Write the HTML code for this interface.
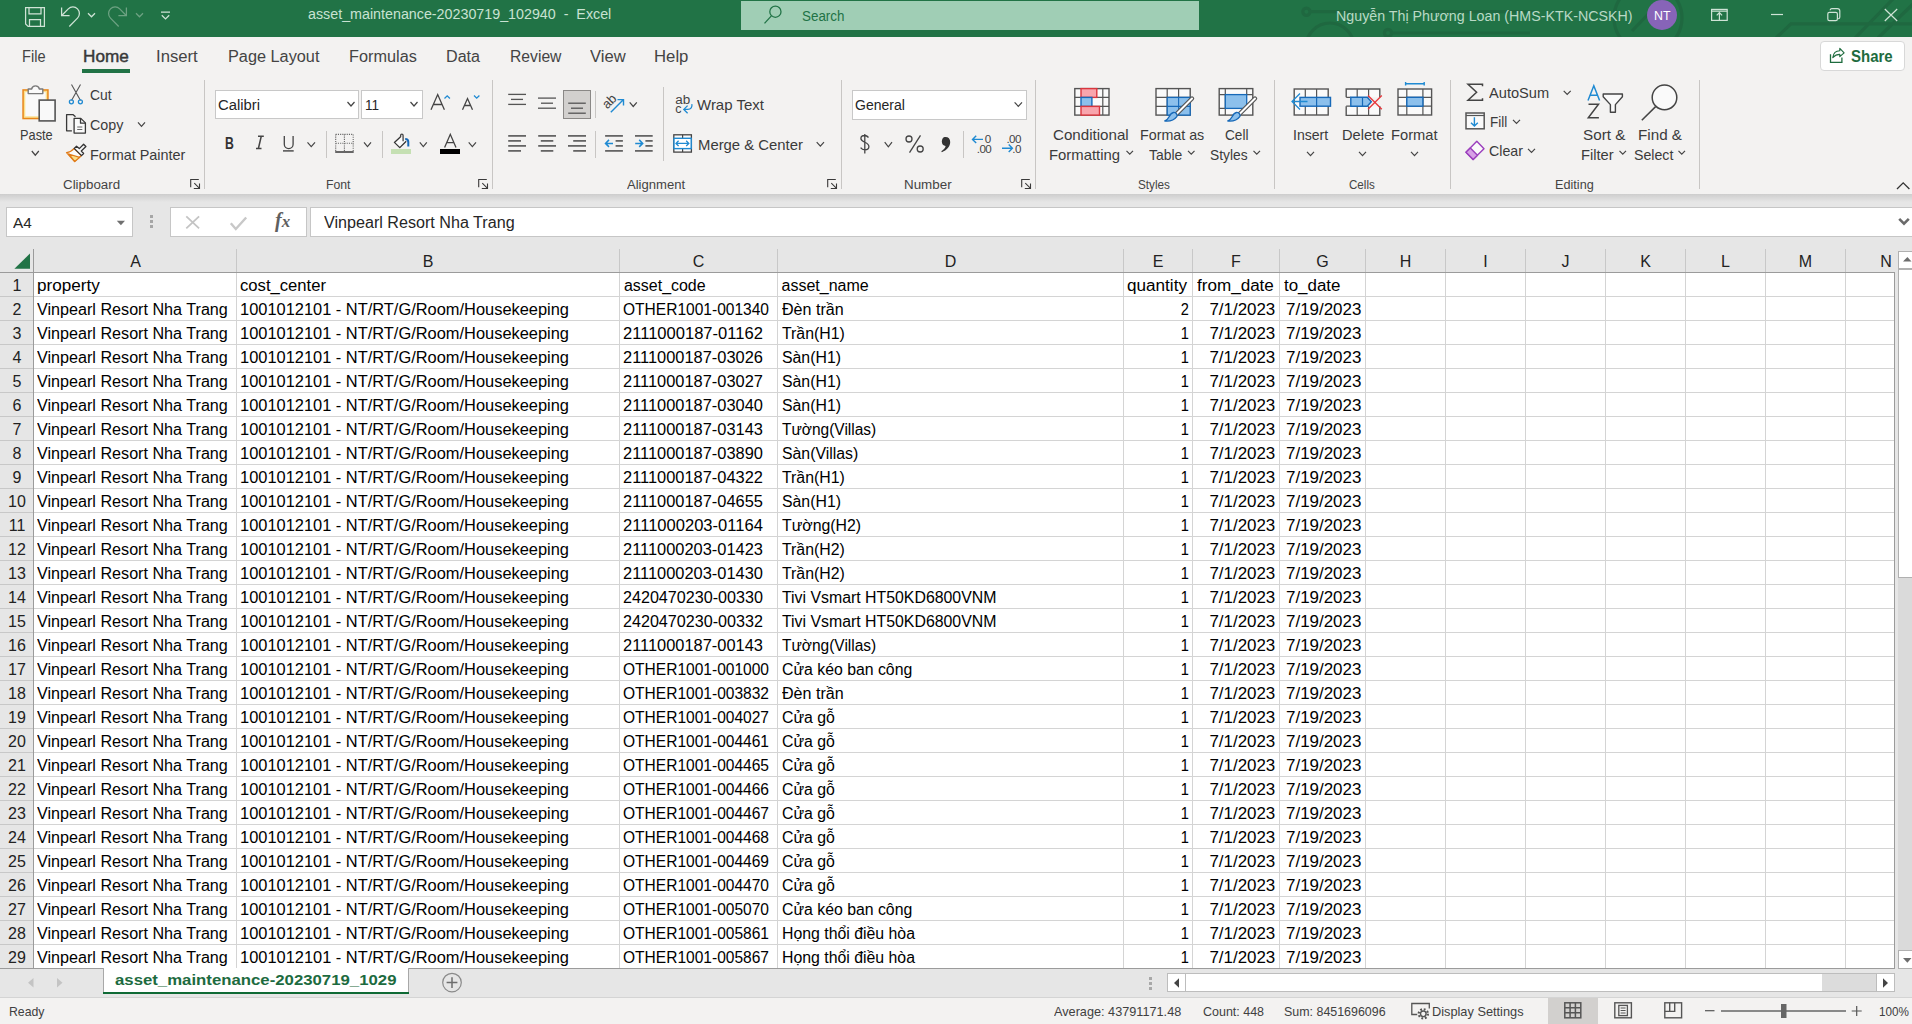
<!DOCTYPE html>
<html><head><meta charset="utf-8"><style>
html,body{margin:0;padding:0;width:1912px;height:1024px;overflow:hidden;background:#fff;}
body{position:relative;font-family:"Liberation Sans",sans-serif;}
.t{position:absolute;white-space:nowrap;line-height:1;}
.r{position:absolute;}
svg.ov{position:absolute;left:0;top:0;}
</style></head><body>
<div class="r" style="left:0px;top:0px;width:1912px;height:37px;background:#217346;"></div>
<svg class="ov" width="1912" height="37"><g fill="none" stroke="#1f6840" stroke-width="3.2"><circle cx="1306.4" cy="11.7" r="3.6"/><path d="M1310 11.7H1535"/><circle cx="1330" cy="47" r="24"/><circle cx="1388" cy="33" r="3.6"/><path d="M1391.6 33H1530"/><circle cx="1648" cy="18" r="34"/><path d="M1632 31L1656 6"/><path d="M1776 38L1791 23.8H1912 M1855 38L1893 -1 M1878 38L1913 4"/></g></svg>
<div class="t" style="top:7px;left:308.00px;font-size:14.29px;color:#c8e2d2;white-space:pre;">asset_maintenance-20230719_102940  -  Excel</div>
<div class="r" style="left:741px;top:1px;width:458px;height:29px;background:#a0ceb5;"></div>
<div class="t" style="top:8px;left:801.70px;font-size:15.22px;color:#217346;transform:scaleX(0.8807);transform-origin:0 0;">Search</div>
<div class="t" style="top:8px;left:1336.40px;font-size:15.22px;color:#b9d9c5;transform:scaleX(0.9360);transform-origin:0 0;">Nguyễn Thị Phương Loan (HMS-KTK-NCSKH)</div>
<div class="r" style="left:1647px;top:-0.4px;width:30px;height:30px;border-radius:50%;background:#8764b8;"></div>
<div class="t" style="top:10px;left:1654.00px;font-size:12.36px;color:#ffffff;">NT</div>
<div class="r" style="left:0px;top:37px;width:1912px;height:157px;background:#f3f2f1;"></div>
<div class="t" style="top:49px;left:21.70px;font-size:16.62px;color:#444444;transform:scaleX(0.8782);transform-origin:0 0;">File</div>
<div class="t" style="top:49px;left:156.30px;font-size:16.62px;color:#444444;transform:scaleX(1.0036);transform-origin:0 0;">Insert</div>
<div class="t" style="top:49px;left:227.50px;font-size:16.62px;color:#444444;transform:scaleX(0.9805);transform-origin:0 0;">Page Layout</div>
<div class="t" style="top:49px;left:348.90px;font-size:16.62px;color:#444444;transform:scaleX(0.9797);transform-origin:0 0;">Formulas</div>
<div class="t" style="top:49px;left:445.90px;font-size:16.62px;color:#444444;transform:scaleX(0.9701);transform-origin:0 0;">Data</div>
<div class="t" style="top:49px;left:509.50px;font-size:16.62px;color:#444444;transform:scaleX(0.9447);transform-origin:0 0;">Review</div>
<div class="t" style="top:49px;left:590.30px;font-size:16.62px;color:#444444;transform:scaleX(0.9991);transform-origin:0 0;">View</div>
<div class="t" style="top:49px;left:654.30px;font-size:16.62px;color:#444444;transform:scaleX(1.0072);transform-origin:0 0;">Help</div>
<div class="t" style="top:49px;left:82.80px;font-size:16.62px;color:#383838;transform:scaleX(1.0321);transform-origin:0 0;-webkit-text-stroke:0.45px #383838;">Home</div>
<div class="r" style="left:82px;top:69px;width:48px;height:4px;background:#217346;"></div>
<div class="r" style="left:1820px;top:41px;width:83px;height:28px;border:1px solid #d8d8d8;border-radius:4px;background:#fff;"></div>
<div class="t" style="top:48px;left:1850.80px;font-size:17.04px;color:#1e6c3e;font-weight:bold;transform:scaleX(0.8803);transform-origin:0 0;">Share</div>
<div class="r" style="left:204px;top:80px;width:1px;height:109px;background:#c8c6c4;"></div>
<div class="r" style="left:492px;top:80px;width:1px;height:109px;background:#c8c6c4;"></div>
<div class="r" style="left:841px;top:80px;width:1px;height:109px;background:#c8c6c4;"></div>
<div class="r" style="left:1035px;top:80px;width:1px;height:109px;background:#c8c6c4;"></div>
<div class="r" style="left:1274px;top:80px;width:1px;height:109px;background:#c8c6c4;"></div>
<div class="r" style="left:1450px;top:80px;width:1px;height:109px;background:#c8c6c4;"></div>
<div class="r" style="left:1699px;top:80px;width:1px;height:109px;background:#c8c6c4;"></div>
<div class="t" style="top:127px;left:19.60px;font-size:15.15px;color:#3b3b3b;transform:scaleX(0.8446);transform-origin:0 0;">Paste</div>
<div class="t" style="top:87px;left:90.20px;font-size:15.15px;color:#3b3b3b;transform:scaleX(0.9167);transform-origin:0 0;">Cut</div>
<div class="t" style="top:117px;left:90.20px;font-size:15.15px;color:#3b3b3b;transform:scaleX(0.9439);transform-origin:0 0;">Copy</div>
<div class="t" style="top:147px;left:90.20px;font-size:15.15px;color:#3b3b3b;transform:scaleX(0.9527);transform-origin:0 0;">Format Painter</div>
<div class="t" style="top:179px;left:62.50px;font-size:12.85px;color:#444444;transform:scaleX(1.0383);transform-origin:0 0;">Clipboard</div>
<div class="r" style="left:215px;top:90px;width:142px;height:27px;border:1px solid #c8c8c8;background:#fff;"></div>
<div class="t" style="top:97px;left:218.40px;font-size:15.36px;color:#262626;transform:scaleX(0.9643);transform-origin:0 0;">Calibri</div>
<div class="r" style="left:361px;top:90px;width:60px;height:27px;border:1px solid #c8c8c8;background:#fff;"></div>
<div class="t" style="top:97px;left:364.80px;font-size:15.36px;color:#262626;transform:scaleX(0.8825);transform-origin:0 0;">11</div>
<div class="t" style="top:135px;left:225.10px;font-size:17.32px;color:#333;font-weight:bold;transform:scaleX(0.7057);transform-origin:0 0;">B</div>
<div class="r" style="left:326px;top:131px;width:1px;height:27px;background:#c8c6c4;"></div>
<div class="r" style="left:382px;top:131px;width:1px;height:27px;background:#c8c6c4;"></div>
<div class="t" style="top:179px;left:325.50px;font-size:12.85px;color:#444444;transform:scaleX(0.9534);transform-origin:0 0;">Font</div>
<div class="r" style="left:563px;top:90px;width:28px;height:29px;background:#d2d0ce;border:1px solid #8a8886;box-sizing:border-box;"></div>
<div class="r" style="left:595px;top:91px;width:1px;height:27px;background:#c8c6c4;"></div>
<div class="r" style="left:663px;top:87px;width:1px;height:74px;background:#c8c6c4;"></div>
<div class="t" style="top:97px;left:697.00px;font-size:15.15px;color:#3b3b3b;transform:scaleX(0.9902);transform-origin:0 0;">Wrap Text</div>
<div class="r" style="left:595px;top:131px;width:1px;height:27px;background:#c8c6c4;"></div>
<div class="t" style="top:137px;left:697.70px;font-size:15.15px;color:#3b3b3b;transform:scaleX(0.9814);transform-origin:0 0;">Merge &amp; Center</div>
<div class="t" style="top:179px;left:626.90px;font-size:12.85px;color:#444444;transform:scaleX(1.0173);transform-origin:0 0;">Alignment</div>
<div class="r" style="left:852px;top:90px;width:173px;height:28px;border:1px solid #c8c8c8;background:#fff;"></div>
<div class="t" style="top:97px;left:855.20px;font-size:15.36px;color:#262626;transform:scaleX(0.9124);transform-origin:0 0;">General</div>
<div class="r" style="left:963px;top:131px;width:1px;height:27px;background:#c8c6c4;"></div>
<div class="t" style="top:179px;left:904.40px;font-size:12.85px;color:#444444;transform:scaleX(1.0421);transform-origin:0 0;">Number</div>
<div class="t" style="top:127px;left:1053.30px;font-size:15.15px;color:#3b3b3b;transform:scaleX(0.9994);transform-origin:0 0;">Conditional</div>
<div class="t" style="top:147px;left:1049.10px;font-size:15.15px;color:#3b3b3b;transform:scaleX(0.9816);transform-origin:0 0;">Formatting</div>
<div class="t" style="top:127px;left:1140.40px;font-size:15.15px;color:#3b3b3b;transform:scaleX(0.9429);transform-origin:0 0;">Format as</div>
<div class="t" style="top:147px;left:1149.00px;font-size:15.15px;color:#3b3b3b;transform:scaleX(0.9195);transform-origin:0 0;">Table</div>
<div class="t" style="top:127px;left:1224.50px;font-size:15.15px;color:#3b3b3b;transform:scaleX(0.8990);transform-origin:0 0;">Cell</div>
<div class="t" style="top:147px;left:1210.00px;font-size:15.15px;color:#3b3b3b;transform:scaleX(0.9106);transform-origin:0 0;">Styles</div>
<div class="t" style="top:179px;left:1138.00px;font-size:12.85px;color:#444444;transform:scaleX(0.9139);transform-origin:0 0;">Styles</div>
<div class="t" style="top:127px;left:1293.40px;font-size:15.15px;color:#3b3b3b;transform:scaleX(0.9292);transform-origin:0 0;">Insert</div>
<div class="t" style="top:127px;left:1341.70px;font-size:15.15px;color:#3b3b3b;transform:scaleX(0.9659);transform-origin:0 0;">Delete</div>
<div class="t" style="top:127px;left:1391.00px;font-size:15.15px;color:#3b3b3b;transform:scaleX(0.9695);transform-origin:0 0;">Format</div>
<div class="t" style="top:179px;left:1348.50px;font-size:12.85px;color:#444444;transform:scaleX(0.9024);transform-origin:0 0;">Cells</div>
<div class="t" style="top:85px;left:1489.00px;font-size:15.15px;color:#3b3b3b;transform:scaleX(0.9654);transform-origin:0 0;">AutoSum</div>
<div class="t" style="top:114px;left:1489.80px;font-size:15.15px;color:#3b3b3b;transform:scaleX(0.8902);transform-origin:0 0;">Fill</div>
<div class="t" style="top:143px;left:1489.00px;font-size:15.15px;color:#3b3b3b;transform:scaleX(0.9388);transform-origin:0 0;">Clear</div>
<div class="t" style="top:127px;left:1583.00px;font-size:15.15px;color:#3b3b3b;transform:scaleX(1.0065);transform-origin:0 0;">Sort &amp;</div>
<div class="t" style="top:147px;left:1581.20px;font-size:15.15px;color:#3b3b3b;transform:scaleX(0.9720);transform-origin:0 0;">Filter</div>
<div class="t" style="top:127px;left:1638.00px;font-size:15.15px;color:#3b3b3b;transform:scaleX(1.0047);transform-origin:0 0;">Find &amp;</div>
<div class="t" style="top:147px;left:1633.60px;font-size:15.15px;color:#3b3b3b;transform:scaleX(0.9353);transform-origin:0 0;">Select</div>
<div class="t" style="top:179px;left:1554.70px;font-size:12.85px;color:#444444;transform:scaleX(0.9868);transform-origin:0 0;">Editing</div>
<div class="r" style="left:0;top:194px;width:1912px;height:8px;background:linear-gradient(#cdcdcd,#e6e6e6);"></div>
<div class="r" style="left:0px;top:202px;width:1912px;height:47px;background:#e6e6e6;"></div>
<div class="r" style="left:6px;top:207px;width:125px;height:28px;border:1px solid #c6c6c6;background:#fff;"></div>
<div class="t" style="top:216px;left:12.90px;font-size:14.8px;color:#262626;transform:scaleX(1.0366);transform-origin:0 0;">A4</div>
<div class="r" style="left:150px;top:215px;width:3px;height:3px;background:#a6a6a6;"></div>
<div class="r" style="left:150px;top:220px;width:3px;height:3px;background:#a6a6a6;"></div>
<div class="r" style="left:150px;top:225px;width:3px;height:3px;background:#a6a6a6;"></div>
<div class="r" style="left:170px;top:207px;width:135px;height:28px;border:1px solid #c6c6c6;background:#fff;"></div>
<div class="r" style="left:310px;top:207px;width:1602px;height:28px;border:1px solid #c6c6c6;border-right:none;background:#fff;"></div>
<div class="t" style="left:275px;top:210px;font-family:'Liberation Serif',serif;font-style:italic;font-weight:bold;font-size:20px;color:#5f5f5f;line-height:1.05;">f<span style="font-size:17px">x</span></div>
<div class="t" style="top:215px;left:324.20px;font-size:16px;color:#262626;transform:scaleX(1.0078);transform-origin:0 0;">Vinpearl Resort Nha Trang</div>
<div class="r" style="left:0px;top:249px;width:1895px;height:23px;background:#e6e6e6;"></div>
<div class="r" style="left:34px;top:273px;width:1861px;height:695px;background:#fff;"></div>
<div class="r" style="left:0px;top:273px;width:33px;height:695px;background:#e6e6e6;"></div>
<div class="r" style="left:236px;top:273px;width:1px;height:695px;background:#d4d4d4;"></div>
<div class="r" style="left:236px;top:249px;width:1px;height:23px;background:#c8c8c8;"></div>
<div class="r" style="left:619px;top:273px;width:1px;height:695px;background:#d4d4d4;"></div>
<div class="r" style="left:619px;top:249px;width:1px;height:23px;background:#c8c8c8;"></div>
<div class="r" style="left:777px;top:273px;width:1px;height:695px;background:#d4d4d4;"></div>
<div class="r" style="left:777px;top:249px;width:1px;height:23px;background:#c8c8c8;"></div>
<div class="r" style="left:1123px;top:273px;width:1px;height:695px;background:#d4d4d4;"></div>
<div class="r" style="left:1123px;top:249px;width:1px;height:23px;background:#c8c8c8;"></div>
<div class="r" style="left:1192px;top:273px;width:1px;height:695px;background:#d4d4d4;"></div>
<div class="r" style="left:1192px;top:249px;width:1px;height:23px;background:#c8c8c8;"></div>
<div class="r" style="left:1279px;top:273px;width:1px;height:695px;background:#d4d4d4;"></div>
<div class="r" style="left:1279px;top:249px;width:1px;height:23px;background:#c8c8c8;"></div>
<div class="r" style="left:1365px;top:273px;width:1px;height:695px;background:#d4d4d4;"></div>
<div class="r" style="left:1365px;top:249px;width:1px;height:23px;background:#c8c8c8;"></div>
<div class="r" style="left:1445px;top:273px;width:1px;height:695px;background:#d4d4d4;"></div>
<div class="r" style="left:1445px;top:249px;width:1px;height:23px;background:#c8c8c8;"></div>
<div class="r" style="left:1525px;top:273px;width:1px;height:695px;background:#d4d4d4;"></div>
<div class="r" style="left:1525px;top:249px;width:1px;height:23px;background:#c8c8c8;"></div>
<div class="r" style="left:1605px;top:273px;width:1px;height:695px;background:#d4d4d4;"></div>
<div class="r" style="left:1605px;top:249px;width:1px;height:23px;background:#c8c8c8;"></div>
<div class="r" style="left:1685px;top:273px;width:1px;height:695px;background:#d4d4d4;"></div>
<div class="r" style="left:1685px;top:249px;width:1px;height:23px;background:#c8c8c8;"></div>
<div class="r" style="left:1765px;top:273px;width:1px;height:695px;background:#d4d4d4;"></div>
<div class="r" style="left:1765px;top:249px;width:1px;height:23px;background:#c8c8c8;"></div>
<div class="r" style="left:1845px;top:273px;width:1px;height:695px;background:#d4d4d4;"></div>
<div class="r" style="left:1845px;top:249px;width:1px;height:23px;background:#c8c8c8;"></div>
<div class="r" style="left:1894px;top:272px;width:1px;height:697px;background:#9b9b9b;"></div>
<div class="r" style="left:33px;top:249px;width:1px;height:720px;background:#9b9b9b;"></div>
<div class="r" style="left:34px;top:296px;width:1860px;height:1px;background:#d4d4d4;"></div>
<div class="r" style="left:0px;top:296px;width:33px;height:1px;background:#c8c8c8;"></div>
<div class="r" style="left:34px;top:320px;width:1860px;height:1px;background:#d4d4d4;"></div>
<div class="r" style="left:0px;top:320px;width:33px;height:1px;background:#c8c8c8;"></div>
<div class="r" style="left:34px;top:344px;width:1860px;height:1px;background:#d4d4d4;"></div>
<div class="r" style="left:0px;top:344px;width:33px;height:1px;background:#c8c8c8;"></div>
<div class="r" style="left:34px;top:368px;width:1860px;height:1px;background:#d4d4d4;"></div>
<div class="r" style="left:0px;top:368px;width:33px;height:1px;background:#c8c8c8;"></div>
<div class="r" style="left:34px;top:392px;width:1860px;height:1px;background:#d4d4d4;"></div>
<div class="r" style="left:0px;top:392px;width:33px;height:1px;background:#c8c8c8;"></div>
<div class="r" style="left:34px;top:416px;width:1860px;height:1px;background:#d4d4d4;"></div>
<div class="r" style="left:0px;top:416px;width:33px;height:1px;background:#c8c8c8;"></div>
<div class="r" style="left:34px;top:440px;width:1860px;height:1px;background:#d4d4d4;"></div>
<div class="r" style="left:0px;top:440px;width:33px;height:1px;background:#c8c8c8;"></div>
<div class="r" style="left:34px;top:464px;width:1860px;height:1px;background:#d4d4d4;"></div>
<div class="r" style="left:0px;top:464px;width:33px;height:1px;background:#c8c8c8;"></div>
<div class="r" style="left:34px;top:488px;width:1860px;height:1px;background:#d4d4d4;"></div>
<div class="r" style="left:0px;top:488px;width:33px;height:1px;background:#c8c8c8;"></div>
<div class="r" style="left:34px;top:512px;width:1860px;height:1px;background:#d4d4d4;"></div>
<div class="r" style="left:0px;top:512px;width:33px;height:1px;background:#c8c8c8;"></div>
<div class="r" style="left:34px;top:536px;width:1860px;height:1px;background:#d4d4d4;"></div>
<div class="r" style="left:0px;top:536px;width:33px;height:1px;background:#c8c8c8;"></div>
<div class="r" style="left:34px;top:560px;width:1860px;height:1px;background:#d4d4d4;"></div>
<div class="r" style="left:0px;top:560px;width:33px;height:1px;background:#c8c8c8;"></div>
<div class="r" style="left:34px;top:584px;width:1860px;height:1px;background:#d4d4d4;"></div>
<div class="r" style="left:0px;top:584px;width:33px;height:1px;background:#c8c8c8;"></div>
<div class="r" style="left:34px;top:608px;width:1860px;height:1px;background:#d4d4d4;"></div>
<div class="r" style="left:0px;top:608px;width:33px;height:1px;background:#c8c8c8;"></div>
<div class="r" style="left:34px;top:632px;width:1860px;height:1px;background:#d4d4d4;"></div>
<div class="r" style="left:0px;top:632px;width:33px;height:1px;background:#c8c8c8;"></div>
<div class="r" style="left:34px;top:656px;width:1860px;height:1px;background:#d4d4d4;"></div>
<div class="r" style="left:0px;top:656px;width:33px;height:1px;background:#c8c8c8;"></div>
<div class="r" style="left:34px;top:680px;width:1860px;height:1px;background:#d4d4d4;"></div>
<div class="r" style="left:0px;top:680px;width:33px;height:1px;background:#c8c8c8;"></div>
<div class="r" style="left:34px;top:704px;width:1860px;height:1px;background:#d4d4d4;"></div>
<div class="r" style="left:0px;top:704px;width:33px;height:1px;background:#c8c8c8;"></div>
<div class="r" style="left:34px;top:728px;width:1860px;height:1px;background:#d4d4d4;"></div>
<div class="r" style="left:0px;top:728px;width:33px;height:1px;background:#c8c8c8;"></div>
<div class="r" style="left:34px;top:752px;width:1860px;height:1px;background:#d4d4d4;"></div>
<div class="r" style="left:0px;top:752px;width:33px;height:1px;background:#c8c8c8;"></div>
<div class="r" style="left:34px;top:776px;width:1860px;height:1px;background:#d4d4d4;"></div>
<div class="r" style="left:0px;top:776px;width:33px;height:1px;background:#c8c8c8;"></div>
<div class="r" style="left:34px;top:800px;width:1860px;height:1px;background:#d4d4d4;"></div>
<div class="r" style="left:0px;top:800px;width:33px;height:1px;background:#c8c8c8;"></div>
<div class="r" style="left:34px;top:824px;width:1860px;height:1px;background:#d4d4d4;"></div>
<div class="r" style="left:0px;top:824px;width:33px;height:1px;background:#c8c8c8;"></div>
<div class="r" style="left:34px;top:848px;width:1860px;height:1px;background:#d4d4d4;"></div>
<div class="r" style="left:0px;top:848px;width:33px;height:1px;background:#c8c8c8;"></div>
<div class="r" style="left:34px;top:872px;width:1860px;height:1px;background:#d4d4d4;"></div>
<div class="r" style="left:0px;top:872px;width:33px;height:1px;background:#c8c8c8;"></div>
<div class="r" style="left:34px;top:896px;width:1860px;height:1px;background:#d4d4d4;"></div>
<div class="r" style="left:0px;top:896px;width:33px;height:1px;background:#c8c8c8;"></div>
<div class="r" style="left:34px;top:920px;width:1860px;height:1px;background:#d4d4d4;"></div>
<div class="r" style="left:0px;top:920px;width:33px;height:1px;background:#c8c8c8;"></div>
<div class="r" style="left:34px;top:944px;width:1860px;height:1px;background:#d4d4d4;"></div>
<div class="r" style="left:0px;top:944px;width:33px;height:1px;background:#c8c8c8;"></div>
<div class="r" style="left:0px;top:272px;width:1895px;height:1px;background:#9b9b9b;"></div>
<div class="r" style="left:0px;top:968px;width:1895px;height:1px;background:#9b9b9b;"></div>
<div class="t" style="top:254px;left:-164.50px;width:600px;text-align:center;font-size:16px;color:#222;">A</div>
<div class="t" style="top:254px;left:128.00px;width:600px;text-align:center;font-size:16px;color:#222;">B</div>
<div class="t" style="top:254px;left:398.50px;width:600px;text-align:center;font-size:16px;color:#222;">C</div>
<div class="t" style="top:254px;left:650.50px;width:600px;text-align:center;font-size:16px;color:#222;">D</div>
<div class="t" style="top:254px;left:858.00px;width:600px;text-align:center;font-size:16px;color:#222;">E</div>
<div class="t" style="top:254px;left:936.00px;width:600px;text-align:center;font-size:16px;color:#222;">F</div>
<div class="t" style="top:254px;left:1022.50px;width:600px;text-align:center;font-size:16px;color:#222;">G</div>
<div class="t" style="top:254px;left:1105.50px;width:600px;text-align:center;font-size:16px;color:#222;">H</div>
<div class="t" style="top:254px;left:1185.50px;width:600px;text-align:center;font-size:16px;color:#222;">I</div>
<div class="t" style="top:254px;left:1265.50px;width:600px;text-align:center;font-size:16px;color:#222;">J</div>
<div class="t" style="top:254px;left:1345.50px;width:600px;text-align:center;font-size:16px;color:#222;">K</div>
<div class="t" style="top:254px;left:1425.50px;width:600px;text-align:center;font-size:16px;color:#222;">L</div>
<div class="t" style="top:254px;left:1505.50px;width:600px;text-align:center;font-size:16px;color:#222;">M</div>
<div class="t" style="top:254px;left:1586.00px;width:600px;text-align:center;font-size:16px;color:#222;">N</div>
<div class="r" style="left:1895px;top:249px;width:17px;height:720px;background:#e6e6e6;"></div>
<div class="r" style="left:1898px;top:251px;width:14px;height:19px;background:#fff;border:1px solid #b0b0b0;border-right:none;border-bottom:2px solid #b0b0b0;box-sizing:border-box;"></div>
<div class="r" style="left:1898px;top:270px;width:14px;height:308px;background:#fff;border-left:1px solid #b0b0b0;border-bottom:1px solid #b0b0b0;box-sizing:border-box;"></div>
<div class="r" style="left:1898px;top:578px;width:14px;height:372px;background:#dadada;"></div>
<div class="r" style="left:1898px;top:950px;width:14px;height:19px;background:#fff;border:1px solid #b0b0b0;border-right:none;box-sizing:border-box;"></div>
<div class="t" style="top:278px;left:-283.00px;width:600px;text-align:center;font-size:16px;color:#222;">1</div>
<div class="t" style="top:278px;left:37.00px;font-size:16px;color:#000;transform:scaleX(1.0700);transform-origin:0 0;">property</div>
<div class="t" style="top:278px;left:240.00px;font-size:16px;color:#000;transform:scaleX(1.0400);transform-origin:0 0;">cost_center</div>
<div class="t" style="top:278px;left:623.60px;font-size:16px;color:#000;transform:scaleX(0.9971);transform-origin:0 0;">asset_code</div>
<div class="t" style="top:278px;left:781.50px;font-size:16px;color:#000;">asset_name</div>
<div class="t" style="top:278px;left:1127.10px;font-size:16px;color:#000;transform:scaleX(1.0699);transform-origin:0 0;">quantity</div>
<div class="t" style="top:278px;left:1196.60px;font-size:16px;color:#000;transform:scaleX(1.0669);transform-origin:0 0;">from_date</div>
<div class="t" style="top:278px;left:1283.80px;font-size:16px;color:#000;transform:scaleX(1.0570);transform-origin:0 0;">to_date</div>
<div class="t" style="top:302px;left:-283.00px;width:600px;text-align:center;font-size:16px;color:#222;">2</div>
<div class="t" style="top:302px;left:37.00px;font-size:16px;color:#000;transform:scaleX(1.0089);transform-origin:0 0;">Vinpearl Resort Nha Trang</div>
<div class="t" style="top:302px;left:240.30px;font-size:16px;color:#000;transform:scaleX(1.0256);transform-origin:0 0;">1001012101 - NT/RT/G/Room/Housekeeping</div>
<div class="t" style="top:302px;left:623.40px;font-size:16px;color:#000;transform:scaleX(0.9713);transform-origin:0 0;">OTHER1001-001340</div>
<div class="t" style="top:302px;left:781.50px;font-size:16px;color:#000;transform:scaleX(1.0050);transform-origin:0 0;">Đèn trần</div>
<div class="t" style="top:302px;right:723.38px;font-size:16px;color:#000;transform:scaleX(0.9122);transform-origin:100% 0;">2</div>
<div class="t" style="top:302px;right:637.04px;font-size:16px;color:#000;transform:scaleX(1.0574);transform-origin:100% 0;">7/1/2023</div>
<div class="t" style="top:302px;left:1286.00px;font-size:16px;color:#000;transform:scaleX(1.0590);transform-origin:0 0;">7/19/2023</div>
<div class="t" style="top:326px;left:-283.00px;width:600px;text-align:center;font-size:16px;color:#222;">3</div>
<div class="t" style="top:326px;left:37.00px;font-size:16px;color:#000;transform:scaleX(1.0089);transform-origin:0 0;">Vinpearl Resort Nha Trang</div>
<div class="t" style="top:326px;left:240.30px;font-size:16px;color:#000;transform:scaleX(1.0256);transform-origin:0 0;">1001012101 - NT/RT/G/Room/Housekeeping</div>
<div class="t" style="top:326px;left:623.40px;font-size:16px;color:#000;transform:scaleX(1.0342);transform-origin:0 0;">2111000187-01162</div>
<div class="t" style="top:326px;left:781.50px;font-size:16px;color:#000;transform:scaleX(0.9900);transform-origin:0 0;">Trần(H1)</div>
<div class="t" style="top:326px;right:723.38px;font-size:16px;color:#000;transform:scaleX(0.9122);transform-origin:100% 0;">1</div>
<div class="t" style="top:326px;right:637.04px;font-size:16px;color:#000;transform:scaleX(1.0574);transform-origin:100% 0;">7/1/2023</div>
<div class="t" style="top:326px;left:1286.00px;font-size:16px;color:#000;transform:scaleX(1.0590);transform-origin:0 0;">7/19/2023</div>
<div class="t" style="top:350px;left:-283.00px;width:600px;text-align:center;font-size:16px;color:#222;">4</div>
<div class="t" style="top:350px;left:37.00px;font-size:16px;color:#000;transform:scaleX(1.0089);transform-origin:0 0;">Vinpearl Resort Nha Trang</div>
<div class="t" style="top:350px;left:240.30px;font-size:16px;color:#000;transform:scaleX(1.0256);transform-origin:0 0;">1001012101 - NT/RT/G/Room/Housekeeping</div>
<div class="t" style="top:350px;left:623.40px;font-size:16px;color:#000;transform:scaleX(1.0257);transform-origin:0 0;">2111000187-03026</div>
<div class="t" style="top:350px;left:781.50px;font-size:16px;color:#000;transform:scaleX(0.9900);transform-origin:0 0;">Sàn(H1)</div>
<div class="t" style="top:350px;right:723.38px;font-size:16px;color:#000;transform:scaleX(0.9122);transform-origin:100% 0;">1</div>
<div class="t" style="top:350px;right:637.04px;font-size:16px;color:#000;transform:scaleX(1.0574);transform-origin:100% 0;">7/1/2023</div>
<div class="t" style="top:350px;left:1286.00px;font-size:16px;color:#000;transform:scaleX(1.0590);transform-origin:0 0;">7/19/2023</div>
<div class="t" style="top:374px;left:-283.00px;width:600px;text-align:center;font-size:16px;color:#222;">5</div>
<div class="t" style="top:374px;left:37.00px;font-size:16px;color:#000;transform:scaleX(1.0089);transform-origin:0 0;">Vinpearl Resort Nha Trang</div>
<div class="t" style="top:374px;left:240.30px;font-size:16px;color:#000;transform:scaleX(1.0256);transform-origin:0 0;">1001012101 - NT/RT/G/Room/Housekeeping</div>
<div class="t" style="top:374px;left:623.40px;font-size:16px;color:#000;transform:scaleX(1.0257);transform-origin:0 0;">2111000187-03027</div>
<div class="t" style="top:374px;left:781.50px;font-size:16px;color:#000;transform:scaleX(0.9900);transform-origin:0 0;">Sàn(H1)</div>
<div class="t" style="top:374px;right:723.38px;font-size:16px;color:#000;transform:scaleX(0.9122);transform-origin:100% 0;">1</div>
<div class="t" style="top:374px;right:637.04px;font-size:16px;color:#000;transform:scaleX(1.0574);transform-origin:100% 0;">7/1/2023</div>
<div class="t" style="top:374px;left:1286.00px;font-size:16px;color:#000;transform:scaleX(1.0590);transform-origin:0 0;">7/19/2023</div>
<div class="t" style="top:398px;left:-283.00px;width:600px;text-align:center;font-size:16px;color:#222;">6</div>
<div class="t" style="top:398px;left:37.00px;font-size:16px;color:#000;transform:scaleX(1.0089);transform-origin:0 0;">Vinpearl Resort Nha Trang</div>
<div class="t" style="top:398px;left:240.30px;font-size:16px;color:#000;transform:scaleX(1.0256);transform-origin:0 0;">1001012101 - NT/RT/G/Room/Housekeeping</div>
<div class="t" style="top:398px;left:623.40px;font-size:16px;color:#000;transform:scaleX(1.0257);transform-origin:0 0;">2111000187-03040</div>
<div class="t" style="top:398px;left:781.50px;font-size:16px;color:#000;transform:scaleX(0.9900);transform-origin:0 0;">Sàn(H1)</div>
<div class="t" style="top:398px;right:723.38px;font-size:16px;color:#000;transform:scaleX(0.9122);transform-origin:100% 0;">1</div>
<div class="t" style="top:398px;right:637.04px;font-size:16px;color:#000;transform:scaleX(1.0574);transform-origin:100% 0;">7/1/2023</div>
<div class="t" style="top:398px;left:1286.00px;font-size:16px;color:#000;transform:scaleX(1.0590);transform-origin:0 0;">7/19/2023</div>
<div class="t" style="top:422px;left:-283.00px;width:600px;text-align:center;font-size:16px;color:#222;">7</div>
<div class="t" style="top:422px;left:37.00px;font-size:16px;color:#000;transform:scaleX(1.0089);transform-origin:0 0;">Vinpearl Resort Nha Trang</div>
<div class="t" style="top:422px;left:240.30px;font-size:16px;color:#000;transform:scaleX(1.0256);transform-origin:0 0;">1001012101 - NT/RT/G/Room/Housekeeping</div>
<div class="t" style="top:422px;left:623.40px;font-size:16px;color:#000;transform:scaleX(1.0257);transform-origin:0 0;">2111000187-03143</div>
<div class="t" style="top:422px;left:781.50px;font-size:16px;color:#000;transform:scaleX(0.9680);transform-origin:0 0;">Tường(Villas)</div>
<div class="t" style="top:422px;right:723.38px;font-size:16px;color:#000;transform:scaleX(0.9122);transform-origin:100% 0;">1</div>
<div class="t" style="top:422px;right:637.04px;font-size:16px;color:#000;transform:scaleX(1.0574);transform-origin:100% 0;">7/1/2023</div>
<div class="t" style="top:422px;left:1286.00px;font-size:16px;color:#000;transform:scaleX(1.0590);transform-origin:0 0;">7/19/2023</div>
<div class="t" style="top:446px;left:-283.00px;width:600px;text-align:center;font-size:16px;color:#222;">8</div>
<div class="t" style="top:446px;left:37.00px;font-size:16px;color:#000;transform:scaleX(1.0089);transform-origin:0 0;">Vinpearl Resort Nha Trang</div>
<div class="t" style="top:446px;left:240.30px;font-size:16px;color:#000;transform:scaleX(1.0256);transform-origin:0 0;">1001012101 - NT/RT/G/Room/Housekeeping</div>
<div class="t" style="top:446px;left:623.40px;font-size:16px;color:#000;transform:scaleX(1.0257);transform-origin:0 0;">2111000187-03890</div>
<div class="t" style="top:446px;left:781.50px;font-size:16px;color:#000;transform:scaleX(0.9900);transform-origin:0 0;">Sàn(Villas)</div>
<div class="t" style="top:446px;right:723.38px;font-size:16px;color:#000;transform:scaleX(0.9122);transform-origin:100% 0;">1</div>
<div class="t" style="top:446px;right:637.04px;font-size:16px;color:#000;transform:scaleX(1.0574);transform-origin:100% 0;">7/1/2023</div>
<div class="t" style="top:446px;left:1286.00px;font-size:16px;color:#000;transform:scaleX(1.0590);transform-origin:0 0;">7/19/2023</div>
<div class="t" style="top:470px;left:-283.00px;width:600px;text-align:center;font-size:16px;color:#222;">9</div>
<div class="t" style="top:470px;left:37.00px;font-size:16px;color:#000;transform:scaleX(1.0089);transform-origin:0 0;">Vinpearl Resort Nha Trang</div>
<div class="t" style="top:470px;left:240.30px;font-size:16px;color:#000;transform:scaleX(1.0256);transform-origin:0 0;">1001012101 - NT/RT/G/Room/Housekeeping</div>
<div class="t" style="top:470px;left:623.40px;font-size:16px;color:#000;transform:scaleX(1.0257);transform-origin:0 0;">2111000187-04322</div>
<div class="t" style="top:470px;left:781.50px;font-size:16px;color:#000;transform:scaleX(0.9900);transform-origin:0 0;">Trần(H1)</div>
<div class="t" style="top:470px;right:723.38px;font-size:16px;color:#000;transform:scaleX(0.9122);transform-origin:100% 0;">1</div>
<div class="t" style="top:470px;right:637.04px;font-size:16px;color:#000;transform:scaleX(1.0574);transform-origin:100% 0;">7/1/2023</div>
<div class="t" style="top:470px;left:1286.00px;font-size:16px;color:#000;transform:scaleX(1.0590);transform-origin:0 0;">7/19/2023</div>
<div class="t" style="top:494px;left:-283.00px;width:600px;text-align:center;font-size:16px;color:#222;">10</div>
<div class="t" style="top:494px;left:37.00px;font-size:16px;color:#000;transform:scaleX(1.0089);transform-origin:0 0;">Vinpearl Resort Nha Trang</div>
<div class="t" style="top:494px;left:240.30px;font-size:16px;color:#000;transform:scaleX(1.0256);transform-origin:0 0;">1001012101 - NT/RT/G/Room/Housekeeping</div>
<div class="t" style="top:494px;left:623.40px;font-size:16px;color:#000;transform:scaleX(1.0257);transform-origin:0 0;">2111000187-04655</div>
<div class="t" style="top:494px;left:781.50px;font-size:16px;color:#000;transform:scaleX(0.9900);transform-origin:0 0;">Sàn(H1)</div>
<div class="t" style="top:494px;right:723.38px;font-size:16px;color:#000;transform:scaleX(0.9122);transform-origin:100% 0;">1</div>
<div class="t" style="top:494px;right:637.04px;font-size:16px;color:#000;transform:scaleX(1.0574);transform-origin:100% 0;">7/1/2023</div>
<div class="t" style="top:494px;left:1286.00px;font-size:16px;color:#000;transform:scaleX(1.0590);transform-origin:0 0;">7/19/2023</div>
<div class="t" style="top:518px;left:-283.00px;width:600px;text-align:center;font-size:16px;color:#222;">11</div>
<div class="t" style="top:518px;left:37.00px;font-size:16px;color:#000;transform:scaleX(1.0089);transform-origin:0 0;">Vinpearl Resort Nha Trang</div>
<div class="t" style="top:518px;left:240.30px;font-size:16px;color:#000;transform:scaleX(1.0256);transform-origin:0 0;">1001012101 - NT/RT/G/Room/Housekeeping</div>
<div class="t" style="top:518px;left:623.40px;font-size:16px;color:#000;transform:scaleX(1.0342);transform-origin:0 0;">2111000203-01164</div>
<div class="t" style="top:518px;left:781.50px;font-size:16px;color:#000;transform:scaleX(0.9900);transform-origin:0 0;">Tường(H2)</div>
<div class="t" style="top:518px;right:723.38px;font-size:16px;color:#000;transform:scaleX(0.9122);transform-origin:100% 0;">1</div>
<div class="t" style="top:518px;right:637.04px;font-size:16px;color:#000;transform:scaleX(1.0574);transform-origin:100% 0;">7/1/2023</div>
<div class="t" style="top:518px;left:1286.00px;font-size:16px;color:#000;transform:scaleX(1.0590);transform-origin:0 0;">7/19/2023</div>
<div class="t" style="top:542px;left:-283.00px;width:600px;text-align:center;font-size:16px;color:#222;">12</div>
<div class="t" style="top:542px;left:37.00px;font-size:16px;color:#000;transform:scaleX(1.0089);transform-origin:0 0;">Vinpearl Resort Nha Trang</div>
<div class="t" style="top:542px;left:240.30px;font-size:16px;color:#000;transform:scaleX(1.0256);transform-origin:0 0;">1001012101 - NT/RT/G/Room/Housekeeping</div>
<div class="t" style="top:542px;left:623.40px;font-size:16px;color:#000;transform:scaleX(1.0257);transform-origin:0 0;">2111000203-01423</div>
<div class="t" style="top:542px;left:781.50px;font-size:16px;color:#000;transform:scaleX(0.9900);transform-origin:0 0;">Trần(H2)</div>
<div class="t" style="top:542px;right:723.38px;font-size:16px;color:#000;transform:scaleX(0.9122);transform-origin:100% 0;">1</div>
<div class="t" style="top:542px;right:637.04px;font-size:16px;color:#000;transform:scaleX(1.0574);transform-origin:100% 0;">7/1/2023</div>
<div class="t" style="top:542px;left:1286.00px;font-size:16px;color:#000;transform:scaleX(1.0590);transform-origin:0 0;">7/19/2023</div>
<div class="t" style="top:566px;left:-283.00px;width:600px;text-align:center;font-size:16px;color:#222;">13</div>
<div class="t" style="top:566px;left:37.00px;font-size:16px;color:#000;transform:scaleX(1.0089);transform-origin:0 0;">Vinpearl Resort Nha Trang</div>
<div class="t" style="top:566px;left:240.30px;font-size:16px;color:#000;transform:scaleX(1.0256);transform-origin:0 0;">1001012101 - NT/RT/G/Room/Housekeeping</div>
<div class="t" style="top:566px;left:623.40px;font-size:16px;color:#000;transform:scaleX(1.0257);transform-origin:0 0;">2111000203-01430</div>
<div class="t" style="top:566px;left:781.50px;font-size:16px;color:#000;transform:scaleX(0.9900);transform-origin:0 0;">Trần(H2)</div>
<div class="t" style="top:566px;right:723.38px;font-size:16px;color:#000;transform:scaleX(0.9122);transform-origin:100% 0;">1</div>
<div class="t" style="top:566px;right:637.04px;font-size:16px;color:#000;transform:scaleX(1.0574);transform-origin:100% 0;">7/1/2023</div>
<div class="t" style="top:566px;left:1286.00px;font-size:16px;color:#000;transform:scaleX(1.0590);transform-origin:0 0;">7/19/2023</div>
<div class="t" style="top:590px;left:-283.00px;width:600px;text-align:center;font-size:16px;color:#222;">14</div>
<div class="t" style="top:590px;left:37.00px;font-size:16px;color:#000;transform:scaleX(1.0089);transform-origin:0 0;">Vinpearl Resort Nha Trang</div>
<div class="t" style="top:590px;left:240.30px;font-size:16px;color:#000;transform:scaleX(1.0256);transform-origin:0 0;">1001012101 - NT/RT/G/Room/Housekeeping</div>
<div class="t" style="top:590px;left:623.40px;font-size:16px;color:#000;transform:scaleX(1.0079);transform-origin:0 0;">2420470230-00330</div>
<div class="t" style="top:590px;left:781.50px;font-size:16px;color:#000;transform:scaleX(0.9910);transform-origin:0 0;">Tivi Vsmart HT50KD6800VNM</div>
<div class="t" style="top:590px;right:723.38px;font-size:16px;color:#000;transform:scaleX(0.9122);transform-origin:100% 0;">1</div>
<div class="t" style="top:590px;right:637.04px;font-size:16px;color:#000;transform:scaleX(1.0574);transform-origin:100% 0;">7/1/2023</div>
<div class="t" style="top:590px;left:1286.00px;font-size:16px;color:#000;transform:scaleX(1.0590);transform-origin:0 0;">7/19/2023</div>
<div class="t" style="top:614px;left:-283.00px;width:600px;text-align:center;font-size:16px;color:#222;">15</div>
<div class="t" style="top:614px;left:37.00px;font-size:16px;color:#000;transform:scaleX(1.0089);transform-origin:0 0;">Vinpearl Resort Nha Trang</div>
<div class="t" style="top:614px;left:240.30px;font-size:16px;color:#000;transform:scaleX(1.0256);transform-origin:0 0;">1001012101 - NT/RT/G/Room/Housekeeping</div>
<div class="t" style="top:614px;left:623.40px;font-size:16px;color:#000;transform:scaleX(1.0079);transform-origin:0 0;">2420470230-00332</div>
<div class="t" style="top:614px;left:781.50px;font-size:16px;color:#000;transform:scaleX(0.9910);transform-origin:0 0;">Tivi Vsmart HT50KD6800VNM</div>
<div class="t" style="top:614px;right:723.38px;font-size:16px;color:#000;transform:scaleX(0.9122);transform-origin:100% 0;">1</div>
<div class="t" style="top:614px;right:637.04px;font-size:16px;color:#000;transform:scaleX(1.0574);transform-origin:100% 0;">7/1/2023</div>
<div class="t" style="top:614px;left:1286.00px;font-size:16px;color:#000;transform:scaleX(1.0590);transform-origin:0 0;">7/19/2023</div>
<div class="t" style="top:638px;left:-283.00px;width:600px;text-align:center;font-size:16px;color:#222;">16</div>
<div class="t" style="top:638px;left:37.00px;font-size:16px;color:#000;transform:scaleX(1.0089);transform-origin:0 0;">Vinpearl Resort Nha Trang</div>
<div class="t" style="top:638px;left:240.30px;font-size:16px;color:#000;transform:scaleX(1.0256);transform-origin:0 0;">1001012101 - NT/RT/G/Room/Housekeeping</div>
<div class="t" style="top:638px;left:623.40px;font-size:16px;color:#000;transform:scaleX(1.0257);transform-origin:0 0;">2111000187-00143</div>
<div class="t" style="top:638px;left:781.50px;font-size:16px;color:#000;transform:scaleX(0.9680);transform-origin:0 0;">Tường(Villas)</div>
<div class="t" style="top:638px;right:723.38px;font-size:16px;color:#000;transform:scaleX(0.9122);transform-origin:100% 0;">1</div>
<div class="t" style="top:638px;right:637.04px;font-size:16px;color:#000;transform:scaleX(1.0574);transform-origin:100% 0;">7/1/2023</div>
<div class="t" style="top:638px;left:1286.00px;font-size:16px;color:#000;transform:scaleX(1.0590);transform-origin:0 0;">7/19/2023</div>
<div class="t" style="top:662px;left:-283.00px;width:600px;text-align:center;font-size:16px;color:#222;">17</div>
<div class="t" style="top:662px;left:37.00px;font-size:16px;color:#000;transform:scaleX(1.0089);transform-origin:0 0;">Vinpearl Resort Nha Trang</div>
<div class="t" style="top:662px;left:240.30px;font-size:16px;color:#000;transform:scaleX(1.0256);transform-origin:0 0;">1001012101 - NT/RT/G/Room/Housekeeping</div>
<div class="t" style="top:662px;left:623.40px;font-size:16px;color:#000;transform:scaleX(0.9713);transform-origin:0 0;">OTHER1001-001000</div>
<div class="t" style="top:662px;left:781.50px;font-size:16px;color:#000;transform:scaleX(0.9890);transform-origin:0 0;">Cửa kéo ban công</div>
<div class="t" style="top:662px;right:723.38px;font-size:16px;color:#000;transform:scaleX(0.9122);transform-origin:100% 0;">1</div>
<div class="t" style="top:662px;right:637.04px;font-size:16px;color:#000;transform:scaleX(1.0574);transform-origin:100% 0;">7/1/2023</div>
<div class="t" style="top:662px;left:1286.00px;font-size:16px;color:#000;transform:scaleX(1.0590);transform-origin:0 0;">7/19/2023</div>
<div class="t" style="top:686px;left:-283.00px;width:600px;text-align:center;font-size:16px;color:#222;">18</div>
<div class="t" style="top:686px;left:37.00px;font-size:16px;color:#000;transform:scaleX(1.0089);transform-origin:0 0;">Vinpearl Resort Nha Trang</div>
<div class="t" style="top:686px;left:240.30px;font-size:16px;color:#000;transform:scaleX(1.0256);transform-origin:0 0;">1001012101 - NT/RT/G/Room/Housekeeping</div>
<div class="t" style="top:686px;left:623.40px;font-size:16px;color:#000;transform:scaleX(0.9713);transform-origin:0 0;">OTHER1001-003832</div>
<div class="t" style="top:686px;left:781.50px;font-size:16px;color:#000;transform:scaleX(1.0050);transform-origin:0 0;">Đèn trần</div>
<div class="t" style="top:686px;right:723.38px;font-size:16px;color:#000;transform:scaleX(0.9122);transform-origin:100% 0;">1</div>
<div class="t" style="top:686px;right:637.04px;font-size:16px;color:#000;transform:scaleX(1.0574);transform-origin:100% 0;">7/1/2023</div>
<div class="t" style="top:686px;left:1286.00px;font-size:16px;color:#000;transform:scaleX(1.0590);transform-origin:0 0;">7/19/2023</div>
<div class="t" style="top:710px;left:-283.00px;width:600px;text-align:center;font-size:16px;color:#222;">19</div>
<div class="t" style="top:710px;left:37.00px;font-size:16px;color:#000;transform:scaleX(1.0089);transform-origin:0 0;">Vinpearl Resort Nha Trang</div>
<div class="t" style="top:710px;left:240.30px;font-size:16px;color:#000;transform:scaleX(1.0256);transform-origin:0 0;">1001012101 - NT/RT/G/Room/Housekeeping</div>
<div class="t" style="top:710px;left:623.40px;font-size:16px;color:#000;transform:scaleX(0.9713);transform-origin:0 0;">OTHER1001-004027</div>
<div class="t" style="top:710px;left:781.50px;font-size:16px;color:#000;transform:scaleX(0.9900);transform-origin:0 0;">Cửa gỗ</div>
<div class="t" style="top:710px;right:723.38px;font-size:16px;color:#000;transform:scaleX(0.9122);transform-origin:100% 0;">1</div>
<div class="t" style="top:710px;right:637.04px;font-size:16px;color:#000;transform:scaleX(1.0574);transform-origin:100% 0;">7/1/2023</div>
<div class="t" style="top:710px;left:1286.00px;font-size:16px;color:#000;transform:scaleX(1.0590);transform-origin:0 0;">7/19/2023</div>
<div class="t" style="top:734px;left:-283.00px;width:600px;text-align:center;font-size:16px;color:#222;">20</div>
<div class="t" style="top:734px;left:37.00px;font-size:16px;color:#000;transform:scaleX(1.0089);transform-origin:0 0;">Vinpearl Resort Nha Trang</div>
<div class="t" style="top:734px;left:240.30px;font-size:16px;color:#000;transform:scaleX(1.0256);transform-origin:0 0;">1001012101 - NT/RT/G/Room/Housekeeping</div>
<div class="t" style="top:734px;left:623.40px;font-size:16px;color:#000;transform:scaleX(0.9713);transform-origin:0 0;">OTHER1001-004461</div>
<div class="t" style="top:734px;left:781.50px;font-size:16px;color:#000;transform:scaleX(0.9900);transform-origin:0 0;">Cửa gỗ</div>
<div class="t" style="top:734px;right:723.38px;font-size:16px;color:#000;transform:scaleX(0.9122);transform-origin:100% 0;">1</div>
<div class="t" style="top:734px;right:637.04px;font-size:16px;color:#000;transform:scaleX(1.0574);transform-origin:100% 0;">7/1/2023</div>
<div class="t" style="top:734px;left:1286.00px;font-size:16px;color:#000;transform:scaleX(1.0590);transform-origin:0 0;">7/19/2023</div>
<div class="t" style="top:758px;left:-283.00px;width:600px;text-align:center;font-size:16px;color:#222;">21</div>
<div class="t" style="top:758px;left:37.00px;font-size:16px;color:#000;transform:scaleX(1.0089);transform-origin:0 0;">Vinpearl Resort Nha Trang</div>
<div class="t" style="top:758px;left:240.30px;font-size:16px;color:#000;transform:scaleX(1.0256);transform-origin:0 0;">1001012101 - NT/RT/G/Room/Housekeeping</div>
<div class="t" style="top:758px;left:623.40px;font-size:16px;color:#000;transform:scaleX(0.9713);transform-origin:0 0;">OTHER1001-004465</div>
<div class="t" style="top:758px;left:781.50px;font-size:16px;color:#000;transform:scaleX(0.9900);transform-origin:0 0;">Cửa gỗ</div>
<div class="t" style="top:758px;right:723.38px;font-size:16px;color:#000;transform:scaleX(0.9122);transform-origin:100% 0;">1</div>
<div class="t" style="top:758px;right:637.04px;font-size:16px;color:#000;transform:scaleX(1.0574);transform-origin:100% 0;">7/1/2023</div>
<div class="t" style="top:758px;left:1286.00px;font-size:16px;color:#000;transform:scaleX(1.0590);transform-origin:0 0;">7/19/2023</div>
<div class="t" style="top:782px;left:-283.00px;width:600px;text-align:center;font-size:16px;color:#222;">22</div>
<div class="t" style="top:782px;left:37.00px;font-size:16px;color:#000;transform:scaleX(1.0089);transform-origin:0 0;">Vinpearl Resort Nha Trang</div>
<div class="t" style="top:782px;left:240.30px;font-size:16px;color:#000;transform:scaleX(1.0256);transform-origin:0 0;">1001012101 - NT/RT/G/Room/Housekeeping</div>
<div class="t" style="top:782px;left:623.40px;font-size:16px;color:#000;transform:scaleX(0.9713);transform-origin:0 0;">OTHER1001-004466</div>
<div class="t" style="top:782px;left:781.50px;font-size:16px;color:#000;transform:scaleX(0.9900);transform-origin:0 0;">Cửa gỗ</div>
<div class="t" style="top:782px;right:723.38px;font-size:16px;color:#000;transform:scaleX(0.9122);transform-origin:100% 0;">1</div>
<div class="t" style="top:782px;right:637.04px;font-size:16px;color:#000;transform:scaleX(1.0574);transform-origin:100% 0;">7/1/2023</div>
<div class="t" style="top:782px;left:1286.00px;font-size:16px;color:#000;transform:scaleX(1.0590);transform-origin:0 0;">7/19/2023</div>
<div class="t" style="top:806px;left:-283.00px;width:600px;text-align:center;font-size:16px;color:#222;">23</div>
<div class="t" style="top:806px;left:37.00px;font-size:16px;color:#000;transform:scaleX(1.0089);transform-origin:0 0;">Vinpearl Resort Nha Trang</div>
<div class="t" style="top:806px;left:240.30px;font-size:16px;color:#000;transform:scaleX(1.0256);transform-origin:0 0;">1001012101 - NT/RT/G/Room/Housekeeping</div>
<div class="t" style="top:806px;left:623.40px;font-size:16px;color:#000;transform:scaleX(0.9713);transform-origin:0 0;">OTHER1001-004467</div>
<div class="t" style="top:806px;left:781.50px;font-size:16px;color:#000;transform:scaleX(0.9900);transform-origin:0 0;">Cửa gỗ</div>
<div class="t" style="top:806px;right:723.38px;font-size:16px;color:#000;transform:scaleX(0.9122);transform-origin:100% 0;">1</div>
<div class="t" style="top:806px;right:637.04px;font-size:16px;color:#000;transform:scaleX(1.0574);transform-origin:100% 0;">7/1/2023</div>
<div class="t" style="top:806px;left:1286.00px;font-size:16px;color:#000;transform:scaleX(1.0590);transform-origin:0 0;">7/19/2023</div>
<div class="t" style="top:830px;left:-283.00px;width:600px;text-align:center;font-size:16px;color:#222;">24</div>
<div class="t" style="top:830px;left:37.00px;font-size:16px;color:#000;transform:scaleX(1.0089);transform-origin:0 0;">Vinpearl Resort Nha Trang</div>
<div class="t" style="top:830px;left:240.30px;font-size:16px;color:#000;transform:scaleX(1.0256);transform-origin:0 0;">1001012101 - NT/RT/G/Room/Housekeeping</div>
<div class="t" style="top:830px;left:623.40px;font-size:16px;color:#000;transform:scaleX(0.9713);transform-origin:0 0;">OTHER1001-004468</div>
<div class="t" style="top:830px;left:781.50px;font-size:16px;color:#000;transform:scaleX(0.9900);transform-origin:0 0;">Cửa gỗ</div>
<div class="t" style="top:830px;right:723.38px;font-size:16px;color:#000;transform:scaleX(0.9122);transform-origin:100% 0;">1</div>
<div class="t" style="top:830px;right:637.04px;font-size:16px;color:#000;transform:scaleX(1.0574);transform-origin:100% 0;">7/1/2023</div>
<div class="t" style="top:830px;left:1286.00px;font-size:16px;color:#000;transform:scaleX(1.0590);transform-origin:0 0;">7/19/2023</div>
<div class="t" style="top:854px;left:-283.00px;width:600px;text-align:center;font-size:16px;color:#222;">25</div>
<div class="t" style="top:854px;left:37.00px;font-size:16px;color:#000;transform:scaleX(1.0089);transform-origin:0 0;">Vinpearl Resort Nha Trang</div>
<div class="t" style="top:854px;left:240.30px;font-size:16px;color:#000;transform:scaleX(1.0256);transform-origin:0 0;">1001012101 - NT/RT/G/Room/Housekeeping</div>
<div class="t" style="top:854px;left:623.40px;font-size:16px;color:#000;transform:scaleX(0.9713);transform-origin:0 0;">OTHER1001-004469</div>
<div class="t" style="top:854px;left:781.50px;font-size:16px;color:#000;transform:scaleX(0.9900);transform-origin:0 0;">Cửa gỗ</div>
<div class="t" style="top:854px;right:723.38px;font-size:16px;color:#000;transform:scaleX(0.9122);transform-origin:100% 0;">1</div>
<div class="t" style="top:854px;right:637.04px;font-size:16px;color:#000;transform:scaleX(1.0574);transform-origin:100% 0;">7/1/2023</div>
<div class="t" style="top:854px;left:1286.00px;font-size:16px;color:#000;transform:scaleX(1.0590);transform-origin:0 0;">7/19/2023</div>
<div class="t" style="top:878px;left:-283.00px;width:600px;text-align:center;font-size:16px;color:#222;">26</div>
<div class="t" style="top:878px;left:37.00px;font-size:16px;color:#000;transform:scaleX(1.0089);transform-origin:0 0;">Vinpearl Resort Nha Trang</div>
<div class="t" style="top:878px;left:240.30px;font-size:16px;color:#000;transform:scaleX(1.0256);transform-origin:0 0;">1001012101 - NT/RT/G/Room/Housekeeping</div>
<div class="t" style="top:878px;left:623.40px;font-size:16px;color:#000;transform:scaleX(0.9713);transform-origin:0 0;">OTHER1001-004470</div>
<div class="t" style="top:878px;left:781.50px;font-size:16px;color:#000;transform:scaleX(0.9900);transform-origin:0 0;">Cửa gỗ</div>
<div class="t" style="top:878px;right:723.38px;font-size:16px;color:#000;transform:scaleX(0.9122);transform-origin:100% 0;">1</div>
<div class="t" style="top:878px;right:637.04px;font-size:16px;color:#000;transform:scaleX(1.0574);transform-origin:100% 0;">7/1/2023</div>
<div class="t" style="top:878px;left:1286.00px;font-size:16px;color:#000;transform:scaleX(1.0590);transform-origin:0 0;">7/19/2023</div>
<div class="t" style="top:902px;left:-283.00px;width:600px;text-align:center;font-size:16px;color:#222;">27</div>
<div class="t" style="top:902px;left:37.00px;font-size:16px;color:#000;transform:scaleX(1.0089);transform-origin:0 0;">Vinpearl Resort Nha Trang</div>
<div class="t" style="top:902px;left:240.30px;font-size:16px;color:#000;transform:scaleX(1.0256);transform-origin:0 0;">1001012101 - NT/RT/G/Room/Housekeeping</div>
<div class="t" style="top:902px;left:623.40px;font-size:16px;color:#000;transform:scaleX(0.9713);transform-origin:0 0;">OTHER1001-005070</div>
<div class="t" style="top:902px;left:781.50px;font-size:16px;color:#000;transform:scaleX(0.9890);transform-origin:0 0;">Cửa kéo ban công</div>
<div class="t" style="top:902px;right:723.38px;font-size:16px;color:#000;transform:scaleX(0.9122);transform-origin:100% 0;">1</div>
<div class="t" style="top:902px;right:637.04px;font-size:16px;color:#000;transform:scaleX(1.0574);transform-origin:100% 0;">7/1/2023</div>
<div class="t" style="top:902px;left:1286.00px;font-size:16px;color:#000;transform:scaleX(1.0590);transform-origin:0 0;">7/19/2023</div>
<div class="t" style="top:926px;left:-283.00px;width:600px;text-align:center;font-size:16px;color:#222;">28</div>
<div class="t" style="top:926px;left:37.00px;font-size:16px;color:#000;transform:scaleX(1.0089);transform-origin:0 0;">Vinpearl Resort Nha Trang</div>
<div class="t" style="top:926px;left:240.30px;font-size:16px;color:#000;transform:scaleX(1.0256);transform-origin:0 0;">1001012101 - NT/RT/G/Room/Housekeeping</div>
<div class="t" style="top:926px;left:623.40px;font-size:16px;color:#000;transform:scaleX(0.9713);transform-origin:0 0;">OTHER1001-005861</div>
<div class="t" style="top:926px;left:781.50px;font-size:16px;color:#000;transform:scaleX(0.9900);transform-origin:0 0;">Họng thổi điều hòa</div>
<div class="t" style="top:926px;right:723.38px;font-size:16px;color:#000;transform:scaleX(0.9122);transform-origin:100% 0;">1</div>
<div class="t" style="top:926px;right:637.04px;font-size:16px;color:#000;transform:scaleX(1.0574);transform-origin:100% 0;">7/1/2023</div>
<div class="t" style="top:926px;left:1286.00px;font-size:16px;color:#000;transform:scaleX(1.0590);transform-origin:0 0;">7/19/2023</div>
<div class="t" style="top:950px;left:-283.00px;width:600px;text-align:center;font-size:16px;color:#222;">29</div>
<div class="t" style="top:950px;left:37.00px;font-size:16px;color:#000;transform:scaleX(1.0089);transform-origin:0 0;">Vinpearl Resort Nha Trang</div>
<div class="t" style="top:950px;left:240.30px;font-size:16px;color:#000;transform:scaleX(1.0256);transform-origin:0 0;">1001012101 - NT/RT/G/Room/Housekeeping</div>
<div class="t" style="top:950px;left:623.40px;font-size:16px;color:#000;transform:scaleX(0.9713);transform-origin:0 0;">OTHER1001-005867</div>
<div class="t" style="top:950px;left:781.50px;font-size:16px;color:#000;transform:scaleX(0.9900);transform-origin:0 0;">Họng thổi điều hòa</div>
<div class="t" style="top:950px;right:723.38px;font-size:16px;color:#000;transform:scaleX(0.9122);transform-origin:100% 0;">1</div>
<div class="t" style="top:950px;right:637.04px;font-size:16px;color:#000;transform:scaleX(1.0574);transform-origin:100% 0;">7/1/2023</div>
<div class="t" style="top:950px;left:1286.00px;font-size:16px;color:#000;transform:scaleX(1.0590);transform-origin:0 0;">7/19/2023</div>
<div class="r" style="left:0px;top:969px;width:1912px;height:28px;background:#e6e6e6;"></div>
<div class="r" style="left:0px;top:997px;width:1912px;height:1px;background:#d4d4d4;"></div>
<div class="r" style="left:103px;top:968px;width:306px;height:26px;background:#fff;border-left:1px solid #a8a8a8;border-right:1px solid #a8a8a8;box-sizing:border-box;"></div>
<div class="r" style="left:103px;top:992px;width:306px;height:2px;background:#0f6a35;"></div>
<div class="t" style="top:972px;left:115.00px;font-size:15.5px;color:#1d6b3f;font-weight:bold;transform:scaleX(1.0815);transform-origin:0 0;">asset_maintenance-20230719_1029</div>
<div class="r" style="left:1149px;top:976.5px;width:3px;height:3px;background:#a8a8a8;"></div>
<div class="r" style="left:1149px;top:981.5px;width:3px;height:3px;background:#a8a8a8;"></div>
<div class="r" style="left:1149px;top:986.5px;width:3px;height:3px;background:#a8a8a8;"></div>
<div class="r" style="left:1167px;top:973px;width:728px;height:19px;background:#fff;border:1px solid #bdbdbd;box-sizing:border-box;"></div>
<div class="r" style="left:1185px;top:974px;width:1px;height:17px;background:#bdbdbd;"></div>
<div class="r" style="left:1822px;top:974px;width:54px;height:17px;background:#dcdcdc;"></div>
<div class="r" style="left:1876px;top:974px;width:1px;height:17px;background:#bdbdbd;"></div>
<div class="r" style="left:0px;top:998px;width:1912px;height:26px;background:#f3f2f1;"></div>
<div class="t" style="top:1006px;left:9.20px;font-size:12.15px;color:#404040;transform:scaleX(1.0109);transform-origin:0 0;">Ready</div>
<div class="t" style="top:1006px;left:1053.90px;font-size:12.15px;color:#404040;transform:scaleX(1.0454);transform-origin:0 0;">Average: 43791171.48</div>
<div class="t" style="top:1006px;left:1202.50px;font-size:12.15px;color:#404040;transform:scaleX(1.0273);transform-origin:0 0;">Count: 448</div>
<div class="t" style="top:1006px;left:1284.00px;font-size:12.15px;color:#404040;transform:scaleX(1.0238);transform-origin:0 0;">Sum: 8451696096</div>
<div class="t" style="top:1006px;left:1431.80px;font-size:12.15px;color:#404040;transform:scaleX(1.0514);transform-origin:0 0;">Display Settings</div>
<div class="r" style="left:1548px;top:998px;width:50px;height:26px;background:#d2d0ce;"></div>
<div class="t" style="top:1006px;left:1879.00px;font-size:12.15px;color:#404040;transform:scaleX(0.9644);transform-origin:0 0;">100%</div>
<svg class="ov" width="1912" height="1024" viewBox="0 0 1912 1024"><g fill="none" stroke="#cfe3d6" stroke-width="1.25"><path d="M25.6 7.6h18.8v18.8h-16.3l-2.5-2.5z M29 7.6v6.3h12v-6.3 M29.5 26.4v-6.8h11v6.8"/><path d="M61.6 7.5v8h8"/><path d="M62 15.2l6.3-6.3a6.5 6.5 0 0 1 9.2 9.2l-8.2 8.4"/><path d="M88 13.3l3.5 3.5l3.5-3.5"/><path d="M164 12.2h9 M164.8 15.2l3.7 3.7l3.7-3.7" transform="translate(-3,0)"/></g><g fill="none" stroke="#6ea283" stroke-width="1.25"><path d="M126.4 7.5v8h-8"/><path d="M126 15.2l-6.3-6.3a6.5 6.5 0 0 0 -9.2 9.2l8.2 8.4"/><path d="M136 13.3l3.5 3.5l3.5-3.5"/></g><g fill="none" stroke="#217346" stroke-width="1.3"><circle cx="775.4" cy="11.7" r="5.6"/><path d="M771.4 15.9L764.5 23.4"/></g><g fill="none" stroke="#cfe3d6" stroke-width="1.2"><rect x="1711.6" y="9.4" width="15.6" height="11"/><path d="M1711.6 11.2h15.6 M1719.4 20.4v-7.6 M1716.7 15.4l2.7-2.7l2.7 2.7"/><path d="M1771 14.5h12"/><rect x="1827.8" y="12.4" width="9.6" height="8.2" rx="1.6"/><path d="M1830.2 10.3v-0.4a1.6 1.6 0 0 1 1.6-1.2h5.6a2.4 2.4 0 0 1 2.4 2.4v6a1.6 1.6 0 0 1-1.2 1.6h-0.4"/><path d="M1884.8 9l12.4 12 M1897.2 9l-12.4 12"/></g><g fill="none" stroke="#1e6c3e" stroke-width="1.3"><path d="M1830.5 54.2V62.4H1841.9V57.4"/><path d="M1832.8 57.6C1833.4 52.8 1836.4 50.7 1839.8 50.7V48.4L1844.1 52.9L1839.8 56.6V54.4C1836.9 54.4 1834.6 55.6 1832.8 57.6Z" fill="#fff" stroke-width="1.15" stroke-linejoin="round"/></g><path d="M1897 189l6.2-6.2l6.2 6.2" fill="none" stroke="#333" stroke-width="1.3"/><g><rect x="23.05" y="89.95" width="24.9" height="28.6" fill="#fbe08e" stroke="#e8861a" stroke-width="1.5"/><rect x="25.3" y="92.2" width="20.4" height="24.1" fill="#f9f9f9"/><path d="M28.2 93.6v-4.6h3.4a4 4 0 0 1 7.8 0h3.4v4.6z" fill="#fafafa" stroke="#7a7a7a" stroke-width="1.4" stroke-linejoin="round"/><rect x="39.2" y="100.1" width="15.9" height="20.8" fill="#f9f9f9" stroke="#555" stroke-width="1.6"/></g><path d="M31.8 151L35.3 155.2L38.8 151" fill="none" stroke="#444" stroke-width="1.2"/><g fill="none"><path d="M71.5 100.5l9-16 M80.5 100.5l-9-16" stroke="#555" stroke-width="1.1"/><circle cx="71.4" cy="101.8" r="2" stroke="#1f8ad2" stroke-width="1.3"/><circle cx="80.4" cy="101.8" r="2" stroke="#1f8ad2" stroke-width="1.3"/></g><g fill="none" stroke="#383838" stroke-width="1.3" stroke-linejoin="round"><path d="M71.9 130.8H66.6V114.6H72.9L75.5 116.8"/><path d="M74.1 118.4H80.8L85.4 122.9V133.1H74.1Z" fill="#fafafa"/><path d="M80.5 118.6V123.2H85.4"/><path d="M77.2 127H82.3 M77.2 129.5H82.3" stroke="#666" stroke-width="1.1"/></g><path d="M138 122.3L141.5 126.3L145 122.3" fill="none" stroke="#444" stroke-width="1.2"/><g><path d="M74.2 148.4C72 151 69.2 152.3 66.6 152.6L74.7 161.6L81.5 155.6z" fill="#fafafa" stroke="#e07a16" stroke-width="1.4" stroke-linejoin="round"/><path d="M68.6 154L79.6 157.4L74.7 161.4z" fill="#f9df8a" stroke="#e07a16" stroke-width="1.2" stroke-linejoin="round"/><path d="M74.2 148.4L76.5 146.2L79.3 148.6L83.6 144.3L85.9 146.5L81.3 151L83.6 153.5L81.5 155.6z" fill="#fafafa" stroke="#333" stroke-width="1.3" stroke-linejoin="round"/></g><g fill="none" stroke="#3a3a3a" stroke-width="1.1"><path d="M190.7 187.2V179.5H198.8 M194.3 183.2L199.3 188.2 M199.5 183.4V188.5H193.8"/></g><path d="M347.5 102L351.0 106L354.5 102" fill="none" stroke="#444" stroke-width="1.2"/><path d="M410.5 102L414.0 106L417.5 102" fill="none" stroke="#444" stroke-width="1.2"/><g fill="none" stroke="#444" stroke-width="1.3"><path d="M431 109.7L437.7 94.5L444.4 109.7 M433.5 104.5h8.4"/><path d="M462.5 109.7L467.5 98.5L472.5 109.7 M464.4 105.5h6.2"/></g><g fill="none" stroke="#1f8ad2" stroke-width="1.3"><path d="M444.5 98.5l2.7-2.7l2.7 2.7"/><path d="M474 95.5l2.7 2.7l2.7-2.7"/></g><path d="M256 148.5h5.5 M258 136.3h5.8 M261.2 136.5l-2.8 12" fill="none" stroke="#444" stroke-width="1.5"/><path d="M284.3 136v8.2a4.4 4.4 0 0 0 8.8 0v-8.2" fill="none" stroke="#444" stroke-width="1.3"/><rect x="283" y="150.2" width="10.7" height="1.4" fill="#444"/><path d="M307.5 142.4L311.25 146.6L315 142.4" fill="none" stroke="#444" stroke-width="1.2"/><g fill="none" stroke="#666" stroke-width="1.1" stroke-dasharray="1.1 1.1"><path d="M335.7 134.4h17.5v17.5 M335.7 134.4v17.5 M344.4 134.4v17.5 M335.7 143.3h17.5"/></g><rect x="335.2" y="151.2" width="18.5" height="1.6" fill="#444"/><path d="M364 142.4L367.5 146.6L371 142.4" fill="none" stroke="#444" stroke-width="1.2"/><g><path d="M400.6 136.8L394.4 142.4L399.8 147.6L406.2 141.3z" fill="#fafafa"/><path d="M400.6 136.8L394.4 142.4L399.8 147.6L406.2 141.3" fill="none" stroke="#333" stroke-width="1.3" stroke-linejoin="round"/><path d="M400.6 137V135.4A1.25 1.25 0 0 1 403.1 135.4V141.2" fill="none" stroke="#444" stroke-width="1.3"/><path d="M405.2 139C407.2 139 408.3 140.2 408.3 142V146.6" fill="none" stroke="#1769b8" stroke-width="2"/><rect x="391" y="149" width="20" height="5" fill="#c5e0b3"/></g><path d="M419.8 142.4L423.3 146.6L426.8 142.4" fill="none" stroke="#444" stroke-width="1.2"/><path d="M444.6 147.6L450.3 134.3L456 147.6 M446.6 142.6h7.4" fill="none" stroke="#444" stroke-width="1.3"/><rect x="440" y="149" width="20" height="5" fill="#000"/><path d="M468.7 142.4L472.35 146.6L476 142.4" fill="none" stroke="#444" stroke-width="1.2"/><g fill="none" stroke="#3a3a3a" stroke-width="1.1"><path d="M478.7 187.2V179.5H486.8 M482.3 183.2L487.3 188.2 M487.5 183.4V188.5H481.8"/></g><rect x="508.2" y="93.75" width="17.80" height="1.3" fill="#555"/><rect x="511" y="98.75" width="12.00" height="1.3" fill="#555"/><rect x="508.2" y="103.75" width="17.80" height="1.3" fill="#555"/><rect x="538" y="97.45" width="18.00" height="1.3" fill="#555"/><rect x="541" y="102.55" width="12.00" height="1.3" fill="#555"/><rect x="538" y="107.55" width="18.00" height="1.3" fill="#555"/><rect x="568.2" y="102.55" width="17.60" height="1.3" fill="#555"/><rect x="571" y="107.55" width="12.00" height="1.3" fill="#555"/><rect x="568.2" y="112.55" width="17.60" height="1.3" fill="#555"/><text x="0" y="0" font-family="Liberation Sans" font-size="13" fill="#444" transform="translate(607.2,109.6) rotate(-45)">ab</text><path d="M610.8 112.3L623.5 99.6 M617.5 99.6h6v6" fill="none" stroke="#1f8ad2" stroke-width="1.4"/><path d="M629.7 102.3L633.25 106.5L636.8 102.3" fill="none" stroke="#444" stroke-width="1.2"/><text x="675.3" y="103.5" font-family="Liberation Sans" font-size="12.5" fill="#444" textLength="15" lengthAdjust="spacingAndGlyphs">ab</text><text x="675.3" y="112.6" font-family="Liberation Sans" font-size="12.5" fill="#444">c</text><path d="M691.8 104.2c0.8 3-1 5.2-4 5.2h-4 M687.6 105.6l-3.8 3.8l3.8 3.8" fill="none" stroke="#1f8ad2" stroke-width="1.3"/><rect x="508.2" y="135.10" width="17.80" height="1.6" fill="#555"/><rect x="508.2" y="140.10" width="12.80" height="1.6" fill="#555"/><rect x="508.2" y="145.10" width="17.80" height="1.6" fill="#555"/><rect x="508.2" y="150.10" width="12.80" height="1.6" fill="#555"/><rect x="538.2" y="135.10" width="17.80" height="1.6" fill="#555"/><rect x="540.8" y="140.10" width="12.50" height="1.6" fill="#555"/><rect x="538.2" y="145.10" width="17.80" height="1.6" fill="#555"/><rect x="540.8" y="150.10" width="12.50" height="1.6" fill="#555"/><rect x="568" y="135.10" width="18.00" height="1.6" fill="#555"/><rect x="573.2" y="140.10" width="12.80" height="1.6" fill="#555"/><rect x="568" y="145.10" width="18.00" height="1.6" fill="#555"/><rect x="573.2" y="150.10" width="12.80" height="1.6" fill="#555"/><rect x="605.1" y="135.10" width="17.80" height="1.6" fill="#555"/><rect x="615.6" y="140.10" width="7.30" height="1.6" fill="#555"/><rect x="615.6" y="145.10" width="7.30" height="1.6" fill="#555"/><rect x="605.1" y="150.10" width="17.80" height="1.6" fill="#555"/><rect x="635" y="135.10" width="17.70" height="1.6" fill="#555"/><rect x="645.4" y="140.10" width="7.30" height="1.6" fill="#555"/><rect x="645.4" y="145.10" width="7.30" height="1.6" fill="#555"/><rect x="635" y="150.10" width="17.70" height="1.6" fill="#555"/><path d="M605.5 143.4h7.5 M609 139.9l-3.5 3.5l3.5 3.5" fill="none" stroke="#1f8ad2" stroke-width="1.5"/><path d="M635.2 143.4h7.5 M639.2 139.9l3.5 3.5l-3.5 3.5" fill="none" stroke="#1f8ad2" stroke-width="1.5"/><rect x="673.8" y="134.8" width="17.6" height="17.3" fill="#fafafa" stroke="#444" stroke-width="1.3"/><path d="M682.6 134.8v3.5 M682.6 148.6v3.5" stroke="#444" stroke-width="1.2"/><rect x="674" y="138.3" width="17.2" height="10.3" fill="#fff" stroke="#1f8ad2" stroke-width="1.4"/><path d="M676 143.4h12.8 M678.6 140.8l-2.6 2.6l2.6 2.6 M686.2 140.8l2.6 2.6l-2.6 2.6" fill="none" stroke="#1f8ad2" stroke-width="1.3"/><path d="M816.7 142.2L820.35 146.2L824 142.2" fill="none" stroke="#444" stroke-width="1.2"/><g fill="none" stroke="#3a3a3a" stroke-width="1.1"><path d="M827.7 187.2V179.5H835.8 M831.3 183.2L836.3 188.2 M836.5 183.4V188.5H830.8"/></g><path d="M1014.6 102.3L1018.3 106.3L1022 102.3" fill="none" stroke="#444" stroke-width="1.2"/><g fill="none" stroke="#444" stroke-width="1.3"><path d="M868.5 137.5c-1-1.3-2.4-2-4-2c-2.2 0-3.6 1.3-3.6 3c0 4.2 8 3.3 8 8c0 2-1.6 3.4-4 3.4c-1.8 0-3.3-0.8-4.3-2.2 M864.8 134v19.6"/></g><path d="M884.7 142.2L888.35 146.8L892 142.2" fill="none" stroke="#444" stroke-width="1.2"/><g fill="none" stroke="#444" stroke-width="1.3"><circle cx="909" cy="139" r="3"/><circle cx="920.2" cy="149" r="3"/><path d="M920.5 135.3L909.5 152.7"/></g><path d="M944.5 137c3.5-0.5 5.7 1.5 5.7 5c0 4.5-3.5 8.2-8.3 10.2l-0.6-1c2.5-1.5 4-3.3 4.3-5.3c-2.2 0-3.8-1.6-3.8-4.3c0-2.3 1.2-4.3 2.7-4.6z" fill="#333"/><path d="M972.5 139.4h10.5 M976.2 135.7l-3.7 3.7l3.7 3.7" fill="none" stroke="#1f8ad2" stroke-width="1.4"/><g font-family="Liberation Sans" font-size="11.6" fill="#444" text-anchor="end"><text x="991.2" y="142.6">0</text><text x="991.2" y="152.7" letter-spacing="-0.6">.00</text><text x="1020.8" y="142.6" letter-spacing="-0.6">.00</text><text x="1020.8" y="152.7" letter-spacing="-0.6">.0</text></g><path d="M1002 148.3h10 M1008.7 144.6l3.7 3.7l-3.7 3.7" fill="none" stroke="#1f8ad2" stroke-width="1.4"/><g fill="none" stroke="#3a3a3a" stroke-width="1.1"><path d="M1021.7 187.2V179.5H1029.8 M1025.3 183.2L1030.3 188.2 M1030.5 183.4V188.5H1024.8"/></g><g stroke-width="1.4"><rect x="1074.8" y="88.6" width="34.2" height="26.5" fill="#fafafa" stroke="#555"/><path d="M1074.8 97.4h34.2 M1074.8 106.4h34.2 M1102.8 88.6v26.5" stroke="#555" fill="none" stroke-width="1.2"/><rect x="1081" y="88.6" width="15.8" height="8.8" fill="#f8a5ad" stroke="#d9363e"/><rect x="1081" y="97.4" width="10.9" height="9" fill="#8cc0ec" stroke="#1769b8"/><rect x="1081" y="106.4" width="18.5" height="8.7" fill="#f8a5ad" stroke="#d9363e"/></g><path d="M1126.5 150.8L1129.75 154.2L1133 150.8" fill="none" stroke="#444" stroke-width="1.2"/><g><rect x="1156" y="88.6" width="34.2" height="26.5" fill="#fafafa" stroke="#555" stroke-width="1.4"/><path d="M1156 97.4h34.2 M1156 106.4h11.2 M1167.2 88.6v26.5 M1178.6 88.6v8.8" stroke="#555" fill="none" stroke-width="1.2"/><rect x="1167.2" y="97.4" width="23" height="17.7" fill="#8cc0ec" stroke="#1769b8" stroke-width="1.3"/><path d="M1167.2 106.4h23 M1178.6 97.4v17.7" stroke="#1769b8" stroke-width="1.1"/><path d="M1192 98.5L1175 115.5" stroke="#555" stroke-width="4.4" stroke-linecap="round"/><path d="M1192 98.5L1175 115.5" stroke="#fff" stroke-width="2" stroke-linecap="round"/><path d="M1164.5 121c4.5 0.5 9.5-0.5 12.3-4.3c1-2-0.8-4.5-3.3-4.2c-2.5 0.4-3.4 2.4-4.4 4.3c-0.9 2-2.3 3.4-4.6 4.2z" fill="#8cc0ec" stroke="#1769b8" stroke-width="1.3"/></g><path d="M1188 150.8L1191.25 154.2L1194.5 150.8" fill="none" stroke="#444" stroke-width="1.2"/><g><rect x="1219.2" y="88.6" width="33.6" height="26.5" fill="#fafafa" stroke="#555" stroke-width="1.4"/><path d="M1225.3 88.6v26.5 M1246.7 88.6v6 M1219.2 94.6h6 M1246.7 94.6h6 M1219.2 108.4h6" stroke="#555" fill="none" stroke-width="1.2"/><rect x="1225.3" y="94.6" width="21.4" height="13.8" fill="#8cc0ec" stroke="#1769b8" stroke-width="1.3"/><path d="M1255 98.5L1238 115.5" stroke="#555" stroke-width="4.4" stroke-linecap="round"/><path d="M1255 98.5L1238 115.5" stroke="#fff" stroke-width="2" stroke-linecap="round"/><path d="M1227.5 121c4.5 0.5 9.5-0.5 12.3-4.3c1-2-0.8-4.5-3.3-4.2c-2.5 0.4-3.4 2.4-4.4 4.3c-0.9 2-2.3 3.4-4.6 4.2z" fill="#8cc0ec" stroke="#1769b8" stroke-width="1.3"/></g><path d="M1253.5 150.8L1256.75 154.2L1260 150.8" fill="none" stroke="#444" stroke-width="1.2"/><g><rect x="1294.2" y="89" width="34" height="26" fill="#fafafa" stroke="#555" stroke-width="1.4"/><path d="M1305.3 89v26 M1316.6 89v26" stroke="#555" stroke-width="1.2"/><rect x="1300" y="97.4" width="30.5" height="8.8" fill="#8cc0ec" stroke="#1769b8" stroke-width="1.4"/><path d="M1316.6 97.4v8.8" stroke="#1769b8" stroke-width="1.2"/><path d="M1292 101.5h15.5 M1300 93.5l-8 8l8 8" fill="none" stroke="#1f8ad2" stroke-width="1.3"/></g><path d="M1307 151.8L1310.5 155.6L1314 151.8" fill="none" stroke="#444" stroke-width="1.2"/><g><path d="M1346.2 97.3v-8.3h33.6v8.3 M1346.2 106.2v9.2h33.6v-9.2" fill="#fafafa" stroke="#555" stroke-width="1.4"/><path d="M1357.2 89v8.3 M1368.6 89v8.3 M1357.2 106.2v9.2 M1368.6 106.2v9.2 M1346.2 97.3h4.5 M1346.2 106.2h4.5" stroke="#555" stroke-width="1.2"/><path d="M1350.8 97.3h16.5l4 4.45l-4 4.45h-16.5z" fill="#8cc0ec" stroke="#1769b8" stroke-width="1.4"/><path d="M1362.5 97.3v8.9" stroke="#1769b8" stroke-width="1.2"/><path d="M1368 95.5l13.8 13.8 M1381.8 95.5l-13.8 13.8" stroke="#e8373c" stroke-width="1.3"/></g><path d="M1359 151.8L1362.5 155.6L1366 151.8" fill="none" stroke="#444" stroke-width="1.2"/><g><path d="M1405.6 83.8h18.6 M1405.6 82v3.6 M1424.2 82v3.6" stroke="#1f8ad2" stroke-width="1.4"/><rect x="1398" y="89" width="33.6" height="26" fill="#fafafa" stroke="#555" stroke-width="1.4"/><path d="M1406.8 89v26 M1422.9 89v26 M1398 97.3h33.6 M1398 106.2h33.6" stroke="#555" stroke-width="1.2"/><rect x="1406.8" y="97.3" width="16.1" height="8.9" fill="#8cc0ec" stroke="#1769b8" stroke-width="1.4"/></g><path d="M1411 151.8L1414.5 155.6L1418 151.8" fill="none" stroke="#444" stroke-width="1.2"/><path d="M1482.5 86.2v-2h-14.5l8.6 8l-8.6 8h14.5v-2" fill="none" stroke="#444" stroke-width="1.5" stroke-linejoin="miter"/><path d="M1563.7 90.8L1567.2 94.4L1570.7 90.8" fill="none" stroke="#444" stroke-width="1.2"/><rect x="1466" y="113" width="18.2" height="15.8" fill="#fafafa" stroke="#555" stroke-width="1.5"/><path d="M1466 115.5h18.2" stroke="#555" stroke-width="1.2"/><path d="M1474.4 117.3v8.8 M1471 122.7l3.4 3.4l3.4-3.4" fill="none" stroke="#1f8ad2" stroke-width="1.4"/><path d="M1513 119.8L1516.5 123.3L1520 119.8" fill="none" stroke="#444" stroke-width="1.2"/><path d="M1466 152.2l10.8-11l7.2 7.6l-11 10.8z" fill="#fafafa" stroke="#9b3fbd" stroke-width="1.4" stroke-linejoin="round"/><path d="M1466 152.2l4.3-4.3l7.2 7.3l-4.3 4.2z" fill="#d7a0e6" stroke="#9b3fbd" stroke-width="1.4" stroke-linejoin="round"/><path d="M1528 148.8L1531.5 152.3L1535 148.8" fill="none" stroke="#444" stroke-width="1.2"/><path d="M1588 100.5L1593.8 85.8L1599.6 100.5 M1590.2 95.3h7.2" fill="none" stroke="#1f8ad2" stroke-width="1.5"/><path d="M1588.5 104.2h10l-10.2 13.6h10.6" fill="none" stroke="#444" stroke-width="1.5"/><path d="M1603.2 94h19.2v2.8l-7 7.8v7.6h-5v-7.6l-7.2-7.8z" fill="#fafafa" stroke="#444" stroke-width="1.4" stroke-linejoin="round"/><path d="M1619.5 150.8L1622.75 154.2L1626 150.8" fill="none" stroke="#444" stroke-width="1.2"/><circle cx="1664.5" cy="97.4" r="12.3" fill="#fafafa" stroke="#444" stroke-width="1.5"/><path d="M1655.6 106.6L1641.8 120.3" stroke="#444" stroke-width="1.5"/><path d="M1678.5 150.8L1681.75 154.2L1685 150.8" fill="none" stroke="#444" stroke-width="1.2"/><path d="M116.8 220.8h8.2l-4.1 4.4z" fill="#707070"/><path d="M186.3 216.3l12.8 12 M199.1 216.3l-12.8 12" stroke="#c4c4c4" stroke-width="1.8"/><path d="M230.8 223.3l5 5.7l10.4-11.5" fill="none" stroke="#c8c8c8" stroke-width="2.4"/><path d="M1899.2 218.8l4.8 4.8l4.8-4.8" fill="none" stroke="#6a6a6a" stroke-width="2.6"/><path d="M30 253.5v15.3h-15.6z" fill="#217346"/><path d="M1907.4 256.9l4.1 4.7h-8.5z" fill="#6d6d6d"/><path d="M1907.4 962.8l4.1-4.7h-8.5z" fill="#6d6d6d"/><path d="M33.5 978v9.5l-5.5-4.75z" fill="#c4c4c4"/><path d="M57 978v9.5l5.5-4.75z" fill="#c4c4c4"/><circle cx="452" cy="982.6" r="9.3" fill="none" stroke="#8a8a8a" stroke-width="1.2"/><path d="M452 977.2v10.8 M446.6 982.6h10.8" stroke="#6d6d6d" stroke-width="1.5"/><path d="M1179 978.3v9.4l-5-4.7z" fill="#444"/><path d="M1883 978.3v9.4l5-4.7z" fill="#444"/><path d="M1420 1014.5h-8.2v-11h17.5v5" fill="none" stroke="#555" stroke-width="1.3"/><circle cx="1423.3" cy="1013.8" r="6.2" fill="#f3f2f1"/><circle cx="1423.3" cy="1013.8" r="4.6" fill="none" stroke="#555" stroke-width="2.2" stroke-dasharray="1.8 1.8"/><circle cx="1423.3" cy="1013.8" r="2.8" fill="#f3f2f1" stroke="#555" stroke-width="1.4"/><g fill="none" stroke="#555" stroke-width="1.5"><rect x="1564.8" y="1002.8" width="16" height="15"/><path d="M1564.8 1007.8h16 M1564.8 1012.8h16 M1570.1 1002.8v15 M1575.4 1002.8v15"/></g><g fill="none" stroke="#555" stroke-width="1.4"><rect x="1614.8" y="1002.8" width="16.6" height="15"/><rect x="1618.8" y="1005.4" width="8.6" height="10.2" stroke-width="1.3"/><path d="M1620.6 1008h5 M1620.6 1010.5h5 M1620.6 1013h5" stroke-width="1"/></g><g fill="none" stroke="#555" stroke-width="1.4"><rect x="1664.8" y="1002.8" width="16.8" height="15"/><path d="M1664.8 1011.4H1674.7V1002.8 M1669.7 1002.8V1011.4"/></g><path d="M1705 1010.7h9.5" stroke="#555" stroke-width="1.2"/><path d="M1721 1011h125" stroke="#666" stroke-width="1.3"/><rect x="1781" y="1004" width="5.5" height="14" fill="#666"/><path d="M1856.7 1006v10 M1851.7 1011h10" stroke="#555" stroke-width="1.2"/></svg>
</body></html>
